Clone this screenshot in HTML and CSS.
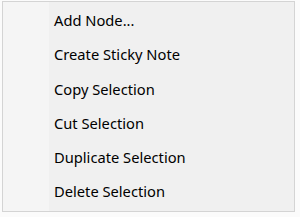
FILE: index.html
```html
<!DOCTYPE html>
<html lang="en">
<head>
  <meta charset="UTF-8">
  <title>Context Menu</title>
  <link rel="stylesheet" href="styles.css">
</head>
<body>
  <div class="menu">
    <div class="menu-item">Add Node...</div>
    <div class="menu-item">Create Sticky Note</div>
    <div class="menu-item">Copy Selection</div>
    <div class="menu-item">Cut Selection</div>
    <div class="menu-item">Duplicate Selection</div>
    <div class="menu-item">Delete Selection</div>
  </div>
</body>
</html>
```

FILE: styles.css
```css
body {
  margin: 0;
  padding: 1px 2px 2px 2px;
  background: #fbfbfb;
  font-family: 'Noto Sans', 'Open Sans', sans-serif;
  color: #000;
}

.menu {
  width: 293px;
  height: 211px;
  box-sizing: border-box;
  border: 1px solid #d4d4d4;
  background: linear-gradient(to right, #f5f5f5 0, #f5f5f5 46px, #f0f0f0 46px);
  padding: 1px 0 0;
}

.menu-item {
  height: 34.3px;
  line-height: 34px;
  padding-left: 51px;
  font-size: 14.7px;
  white-space: nowrap;
}
```
